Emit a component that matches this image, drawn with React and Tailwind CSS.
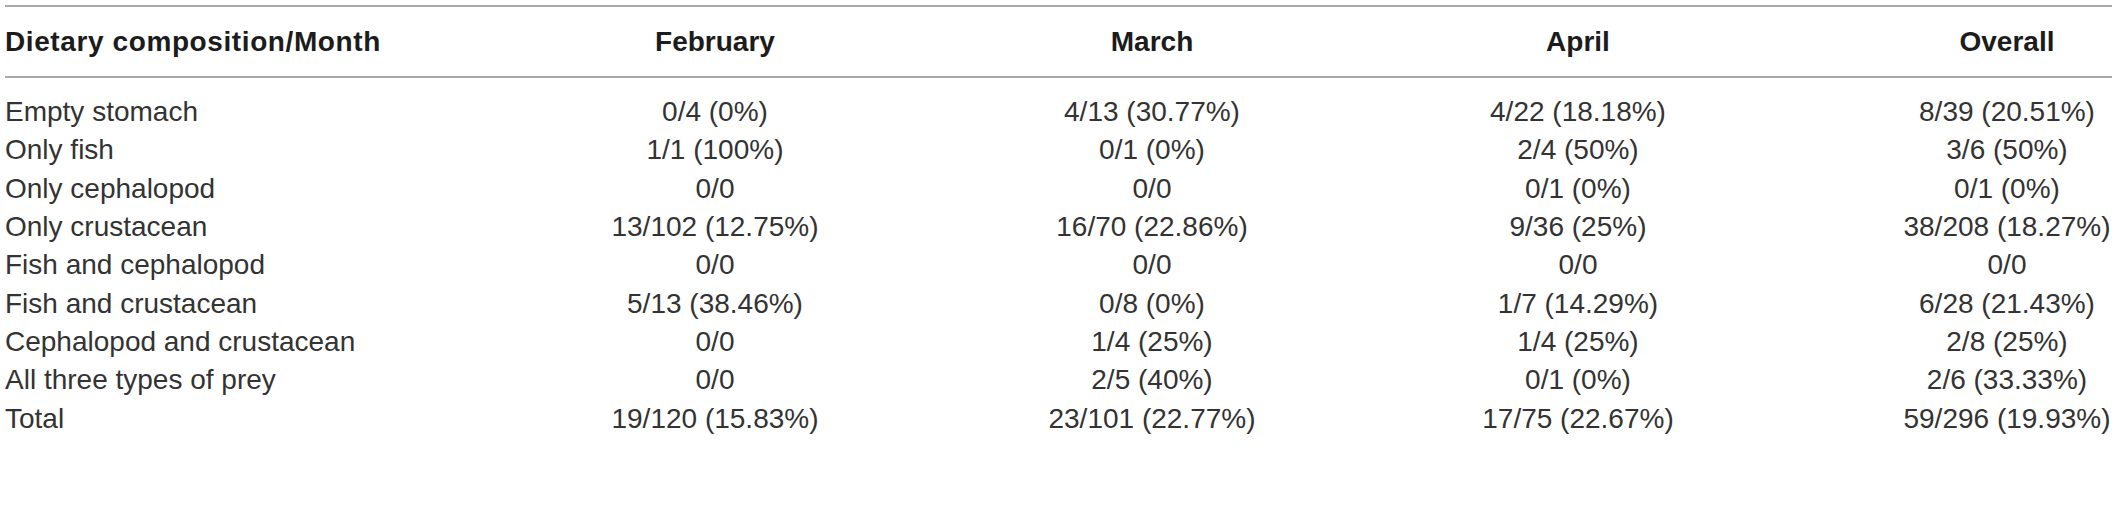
// diet composition table by month
const rows = [
  ['Empty stomach', '0/4 (0%)', '4/13 (30.77%)', '4/22 (18.18%)', '8/39 (20.51%)'],
  ['Only fish', '1/1 (100%)', '0/1 (0%)', '2/4 (50%)', '3/6 (50%)'],
  ['Only cephalopod', '0/0', '0/0', '0/1 (0%)', '0/1 (0%)'],
  ['Only crustacean', '13/102 (12.75%)', '16/70 (22.86%)', '9/36 (25%)', '38/208 (18.27%)'],
  ['Fish and cephalopod', '0/0', '0/0', '0/0', '0/0'],
  ['Fish and crustacean', '5/13 (38.46%)', '0/8 (0%)', '1/7 (14.29%)', '6/28 (21.43%)'],
  ['Cephalopod and crustacean', '0/0', '1/4 (25%)', '1/4 (25%)', '2/8 (25%)'],
  ['All three types of prey', '0/0', '2/5 (40%)', '0/1 (0%)', '2/6 (33.33%)'],
  ['Total', '19/120 (15.83%)', '23/101 (22.77%)', '17/75 (22.67%)', '59/296 (19.93%)'],
];

const cols = 'grid grid-cols-[510px_400px_474px_378px_1fr]';

const App = () => {
  return (
    <div className="w-[2118px] h-[512px] bg-white text-[28px] text-[#231f20] font-['Liberation_Sans',Arial,sans-serif]">
      <div className="ml-[5px] mr-[6px] pt-[5px]">
        <div className="h-[2px] bg-[#a8a8a8]" />
        <div className={`${cols} h-[69px] items-center font-bold text-[#1c1c1c]`}>
          <div className="tracking-[0.6px]">Dietary composition/Month</div>
          <div className="text-center">February</div>
          <div className="text-center">March</div>
          <div className="text-center">April</div>
          <div className="text-center pl-[135px]">Overall</div>
        </div>
        <div className="h-[2px] bg-[#a8a8a8]" />
        <div className="pt-[15px]">
          {rows.map(r => (
            <div key={r[0]} className={`${cols} h-[38.3px] items-center leading-none text-[#333333]`}>
              <div>{r[0]}</div>
              <div className="text-center">{r[1]}</div>
              <div className="text-center">{r[2]}</div>
              <div className="text-center">{r[3]}</div>
              <div className="text-center pl-[135px]">{r[4]}</div>
            </div>
          ))}
        </div>
      </div>
    </div>
  );
};

export default App;
